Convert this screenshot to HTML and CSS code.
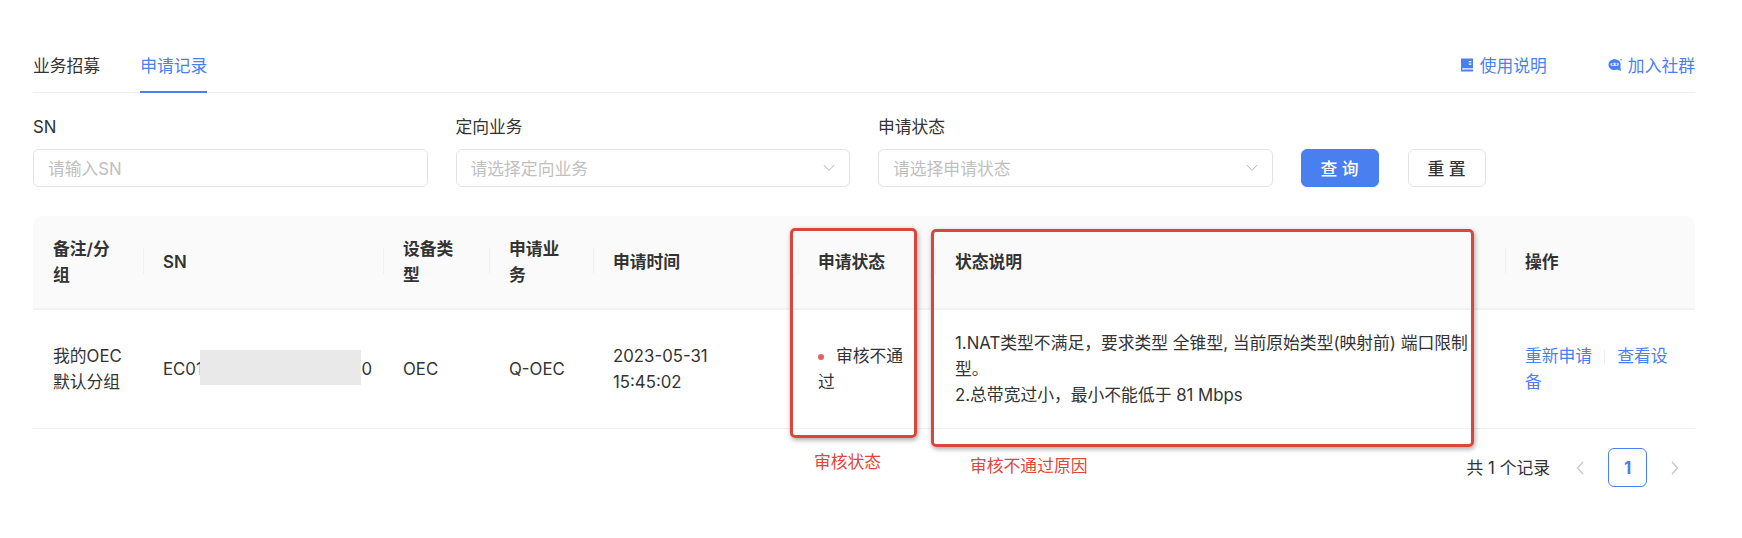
FILE: index.html
```html
<!DOCTYPE html>
<html lang="zh">
<head>
<meta charset="utf-8">
<title>申请记录</title>
<link rel="stylesheet" href="styles.css">
</head>
<body>
<div class="page">
  <div class="tabs">
    <a class="tab">业务招募</a>
    <a class="tab active">申请记录</a>
    <div class="links">
      <a class="link"><svg class="ico" viewBox="0 0 14 14"><path d="M1 .5h12v13H1z" fill="#4a7ff0"/><path d="M2 10.300h11v1.200H2z" fill="#fff"/><path d="M8.800 3h2.600v1.200H8.800zM8.800 5.600h2.600v1.200H8.800z" fill="#fff"/></svg>使用说明</a>
      <a class="link"><svg class="ico" viewBox="0 0 15 14"><path d="M7 .8c3.700 0 6.500 2.300 6.500 5.500 0 1.200-.2 2.300-.2 3.500l.7 3.700-3.900-1.600c-.9.300-2 .500-3.100.500C3.300 12.400.5 10 .5 6.700S3.300.8 7 .8z" fill="#4a7ff0"/><path d="M2.700 5.300c2.300-1 6.400-1.100 8.800-.3.400 1.300 0 2.400-1.200 2.700-2.200.4-4.800.4-6.500 0-1.200-.3-1.500-1.400-1.100-2.400z" fill="#dbe6fc"/><circle cx="5.200" cy="6.200" r="1" fill="#4a7ff0"/><circle cx="9" cy="6.200" r="1" fill="#4a7ff0"/><circle cx="14" cy="1.400" r=".8" fill="#4a7ff0"/></svg>加入社群</a>
    </div>
  </div>

  <form class="filters">
    <div class="field">
      <label class="label">SN</label>
      <div class="control"><span class="ph">请输入SN</span></div>
    </div>
    <div class="field">
      <label class="label">定向业务</label>
      <div class="control"><span class="ph">请选择定向业务</span><svg class="arrow" viewBox="0 0 12 8"><path d="M.8 1l5.200 5.400L11.200 1" fill="none" stroke="#b5b5b5" stroke-width="1"/></svg></div>
    </div>
    <div class="field">
      <label class="label">申请状态</label>
      <div class="control"><span class="ph">请选择申请状态</span><svg class="arrow" viewBox="0 0 12 8"><path d="M.8 1l5.200 5.400L11.200 1" fill="none" stroke="#b5b5b5" stroke-width="1"/></svg></div>
    </div>
    <div class="actions">
      <button type="button" class="btn primary">查 询</button>
      <button type="button" class="btn">重 置</button>
    </div>
  </form>

  <table class="table">
    <colgroup>
      <col class="c1"><col class="c2"><col class="c3"><col class="c4"><col class="c5"><col class="c6"><col class="c7"><col class="c8">
    </colgroup>
    <thead>
      <tr>
        <th>备注/分组</th>
        <th>SN</th>
        <th>设备类型</th>
        <th>申请业务</th>
        <th>申请时间</th>
        <th>申请状态</th>
        <th>状态说明</th>
        <th>操作</th>
      </tr>
    </thead>
    <tbody>
      <tr>
        <td>我的OEC<br>默认分组</td>
        <td class="sn">EC010000000000000000</td>
        <td>OEC</td>
        <td>Q-OEC</td>
        <td>2023-05-31<br>15:45:02</td>
        <td><span class="dot"></span>审核不通过</td>
        <td>1.NAT类型不满足，要求类型 全锥型, 当前原始类型(映射前) 端口限制型。<br>2.总带宽过小，最小不能低于 81 Mbps</td>
        <td class="ops"><a>重新申请</a><i class="sep"></i><a>查看设备</a></td>
      </tr>
    </tbody>
  </table>

  <div class="pager">
    <span class="total">共 1 个记录</span>
    <svg class="chev" viewBox="0 0 8 14"><path d="M7 1L1.500 7 7 13" fill="none" stroke="#c4c4c4" stroke-width="1.200"/></svg>
    <span class="pg">1</span>
    <svg class="chev" viewBox="0 0 8 14"><path d="M1 1l5.500 6L1 13" fill="none" stroke="#c4c4c4" stroke-width="1.200"/></svg>
  </div>

  <div class="mask"></div>
  <div class="mark mark-status"></div>
  <div class="mark mark-reason"></div>
  <span class="note note-status">审核状态</span>
  <span class="note note-reason">审核不通过原因</span>
</div>
</body>
</html>
```
FILE: styles.css
```css
* { box-sizing: border-box; }
html, body { margin: 0; background: #fff; }
body { font-family: "Inter", "Noto Sans CJK SC", sans-serif; font-size: 16.8px; color: #333; }
.page { position: relative; width: 1742px; height: 538px; padding: 44px 47px 0 33px; overflow: hidden; }

.tabs { display: flex; align-items: flex-start; height: 49px; border-bottom: 1px solid #eee; }
.tab { height: 49px; line-height: 44px; margin-right: 40px; color: #333; }
.tab.active { color: #4a7ff0; border-bottom: 2px solid #4a7ff0; }
.links { margin-left: auto; display: flex; gap: 61px; }
.link { display: flex; align-items: center; height: 42px; color: #4a7ff0; gap: 6px; }
.ico { width: 14px; height: 14px; }

.filters { display: flex; gap: 28px; margin-top: 23px; }
.field { width: 394.500px; flex: none; }
.label { display: block; line-height: 22px; height: 22px; }
.control { display: flex; align-items: center; justify-content: space-between; height: 38px; margin-top: 11px; padding: 0 14px; border: 1px solid #e3e3e3; border-radius: 6px; color: #bfbfbf; }
.arrow { width: 12px; height: 8px; }
.actions { display: flex; gap: 29px; align-self: flex-end; }
.btn { width: 78px; height: 38px; padding: 0; border: 1px solid #e3e3e3; border-radius: 6px; background: #fff; color: #333; font: inherit; font-weight: 500; }
.btn.primary { background: #4a7ff0; border-color: #4a7ff0; color: #fff; }

.table { width: 1662px; margin-top: 29px; border-collapse: separate; border-spacing: 0; table-layout: fixed; }
.c1 { width: 110px; } .c2 { width: 240px; } .c3 { width: 106px; } .c4 { width: 104px; }
.c5 { width: 205px; } .c6 { width: 137px; } .c7 { width: 570px; } .c8 { width: 190px; }
th, td { padding: 0 20px; line-height: 26px; text-align: left; vertical-align: middle; }
th { position: relative; height: 94px; background: #fafafa; border-bottom: 2px solid #f2f2f2; font-weight: 600; }
th:first-child { border-top-left-radius: 10px; }
th:last-child { border-top-right-radius: 10px; }
th + th::before { content: ""; position: absolute; left: 0; top: 32px; height: 26px; width: 1px; background: #f0f0f0; }
td { height: 119px; border-bottom: 1px solid #f0f0f0; }
.sn { white-space: nowrap; overflow: hidden; }
.dot { display: inline-block; width: 6px; height: 6px; margin: 0 12px 2px 0; border-radius: 50%; background: #e5615a; }
.ops { color: #4a7ff0; }
.sep { display: inline-block; width: 1px; height: 14px; margin: 0 12px; background: #eee; vertical-align: -2px; }

.pager { display: flex; align-items: center; justify-content: flex-end; height: 39px; margin-top: 19px; padding-right: 16px; }
.total { margin-right: 26px; position: relative; top: -1px; }
.chev { width: 8px; height: 14px; }
.pg { display: flex; align-items: center; justify-content: center; width: 39px; height: 39px; margin: 0 24px; border: 1px solid #4a7ff0; border-radius: 6px; color: #4a7ff0; font-weight: 700; }

.mask { position: absolute; left: 200px; top: 350px; width: 161px; height: 35px; background: #e9e9e9; }
.mark { position: absolute; border: 3px solid #d9463a; border-radius: 5px; box-shadow: 1px 2px 5px rgba(0,0,0,.35); }
.mark-status { left: 790px; top: 228px; width: 127px; height: 210px; }
.mark-reason { left: 931px; top: 229px; width: 543px; height: 218px; }
.note { position: absolute; color: #e0473a; font-size: 16.8px; line-height: 22px; }
.note-status { left: 814px; top: 451px; }
.note-reason { left: 970px; top: 455px; }
```
